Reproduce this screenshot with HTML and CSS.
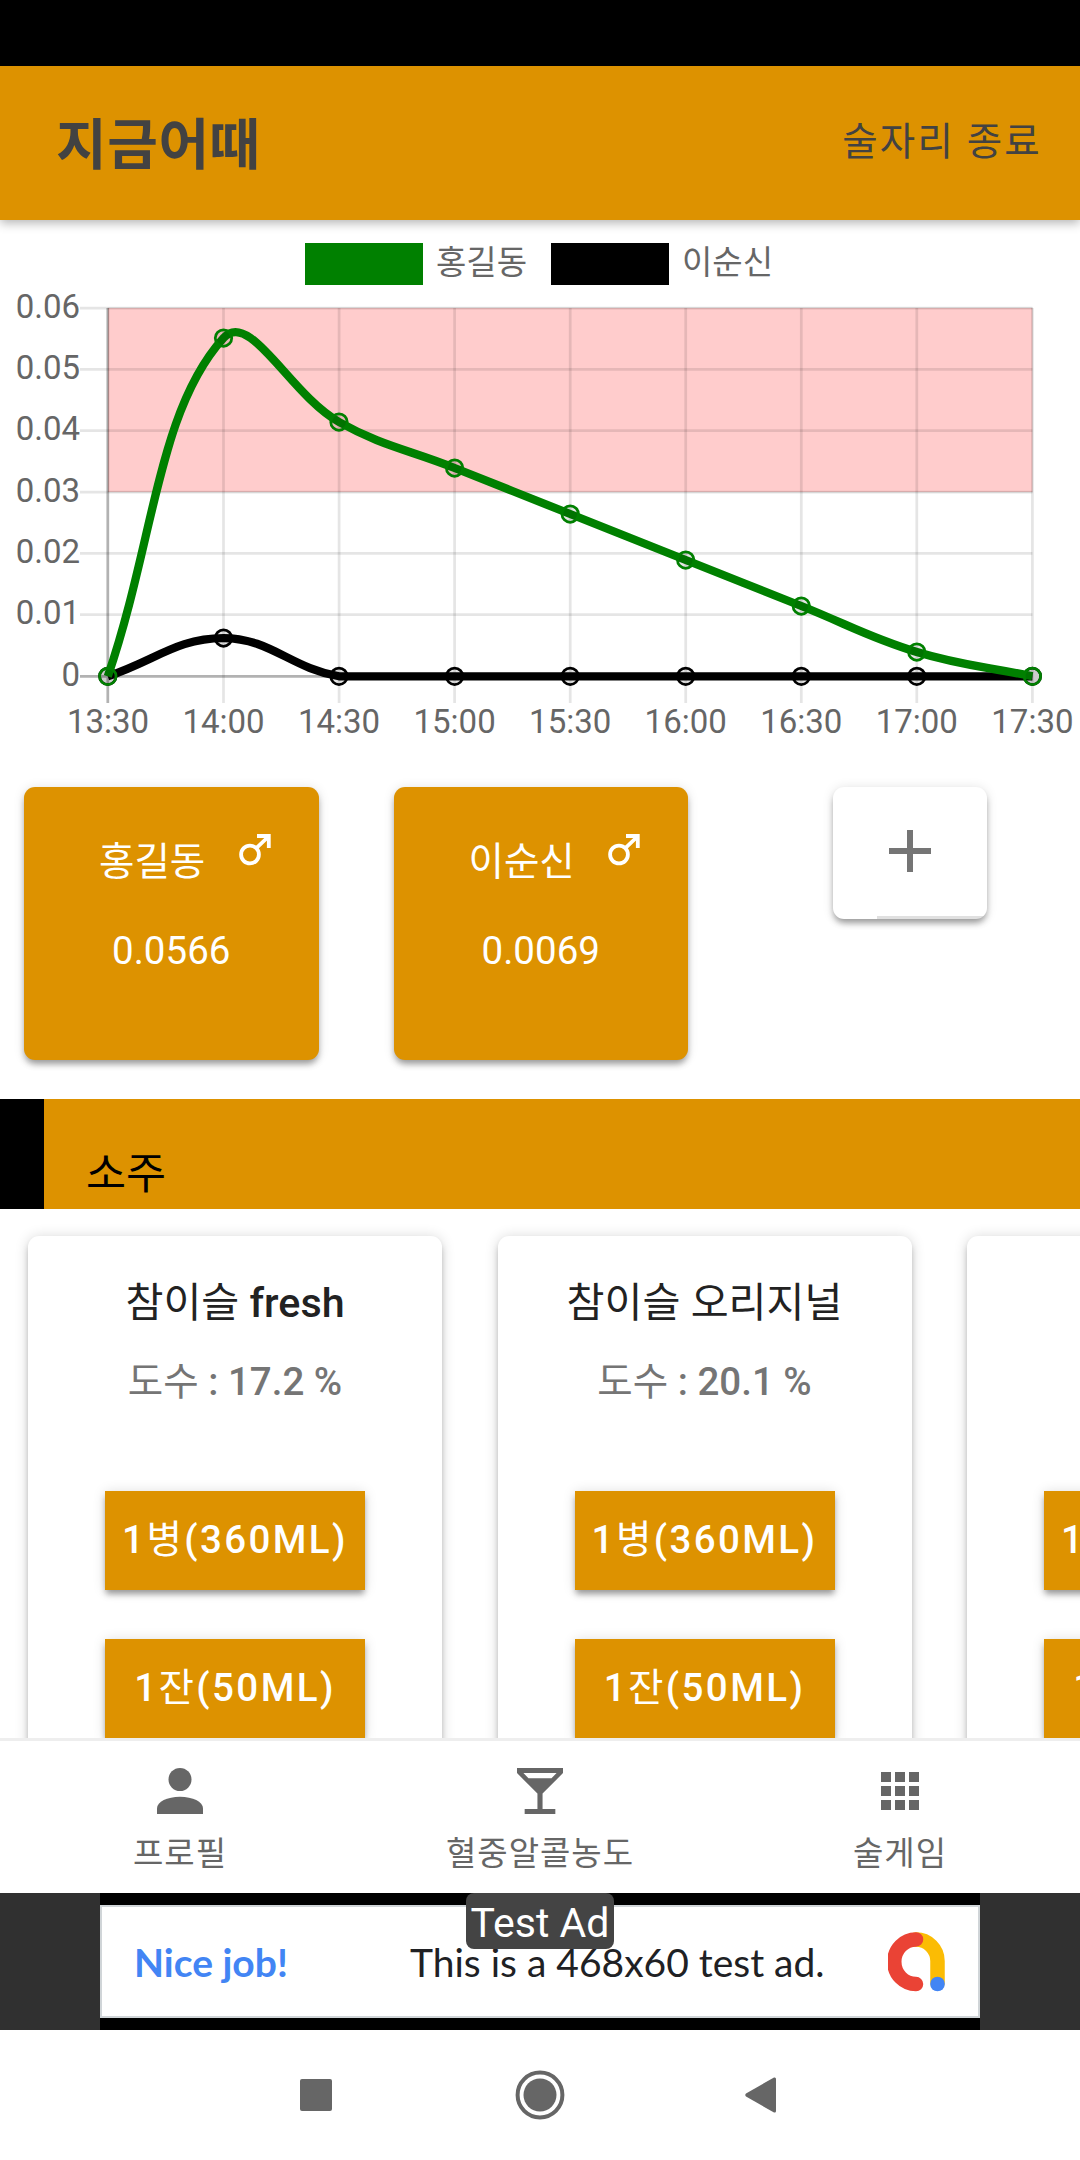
FILE: index.html
```html
<!DOCTYPE html>
<html lang="ko">
<head>
    <meta charset="UTF-8">
    <title>지금어때</title>
    <link rel="stylesheet" href="styles.css">
</head>
<body>
<div class="status-bar"></div>
<header class="toolbar">
    <h1>지금어때</h1>
    <button class="end-button">술자리 종료</button>
</header>
<main class="content">
    <div class="legend">
        <span class="legend-box green"></span><span class="legend-text">홍길동</span>
        <span class="legend-box black"></span><span class="legend-text">이순신</span>
    </div>
    <svg class="chart" width="1080" height="464" viewBox="0 286 1080 464">
        <!-- 위험 구간 -->
        <rect x="108" y="308" width="924.4" height="184" fill="#ff0000" fill-opacity="0.2" stroke="#000" stroke-opacity="0.12"/>
        <g class="grid">
            <path d="M80 308H1032.4M80 369.3H1032.4M80 430.6H1032.4M80 492H1032.4M80 553.3H1032.4M80 614.6H1032.4"/>
            <path d="M223.5 308V703M339.1 308V703M454.6 308V703M570.2 308V703M685.7 308V703M801.3 308V703M916.8 308V703M1032.4 308V703"/>
            <path class="zero" d="M80 676.3H1032.4M107.8 308V703"/>
        </g>
        <g class="y-labels">
            <text x="80" y="317.5">0.06</text>
            <text x="80" y="378.8">0.05</text>
            <text x="80" y="440">0.04</text>
            <text x="80" y="501.5">0.03</text>
            <text x="80" y="562.7">0.02</text>
            <text x="80" y="624">0.01</text>
            <text x="80" y="685.5">0</text>
        </g>
        <g class="x-labels">
            <text x="108" y="732.5">13:30</text>
            <text x="223.5" y="732.5">14:00</text>
            <text x="339" y="732.5">14:30</text>
            <text x="454.6" y="732.5">15:00</text>
            <text x="570.2" y="732.5">15:30</text>
            <text x="685.7" y="732.5">16:00</text>
            <text x="801.3" y="732.5">16:30</text>
            <text x="916.8" y="732.5">17:00</text>
            <text x="1032.4" y="732.5">17:30</text>
        </g>
        <g class="series black-series">
            <path d="M107.8 676.3C154.2 661 177.3 638 223.5 638S291.6 668.4 339 676.3H1032.4"/>
            <circle cx="107.8" cy="676.3" r="8.25"/>
            <circle cx="223.5" cy="638" r="8.25"/>
            <circle cx="339" cy="676.3" r="8.25"/>
            <circle cx="454.6" cy="676.3" r="8.25"/>
            <circle cx="570.2" cy="676.3" r="8.25"/>
            <circle cx="685.7" cy="676.3" r="8.25"/>
            <circle cx="801.3" cy="676.3" r="8.25"/>
            <circle cx="916.8" cy="676.3" r="8.25"/>
            <circle cx="1032.4" cy="676.3" r="8.25"/>
        </g>
        <g class="series green-series">
            <path d="M107.8 676.3C154.2 541 157.5 410.7 223.5 338C249.9 309 289.7 394.2 339 422C382 446.2 408.4 449.6 454.6 468C500.8 486.4 524 495.6 570.2 514C616.4 532.4 639.5 541.6 685.7 560C731.9 578.4 755.1 587.6 801.3 606C847.5 624.4 869.4 637.6 916.8 652C961.9 665.7 986.2 666.6 1032.4 676.3"/>
            <circle cx="107.8" cy="676.3" r="8.25"/>
            <circle cx="223.5" cy="338" r="8.25"/>
            <circle cx="339" cy="422" r="8.25"/>
            <circle cx="454.6" cy="468" r="8.25"/>
            <circle cx="570.2" cy="514" r="8.25"/>
            <circle cx="685.7" cy="560" r="8.25"/>
            <circle cx="801.3" cy="606" r="8.25"/>
            <circle cx="916.8" cy="652" r="8.25"/>
            <circle cx="1032.4" cy="676.3" r="8.25"/>
        </g>
    </svg>
    <div class="people">
        <div class="person-card">
            <div class="person-name">
                <span>홍길동</span>
                <svg class="male" width="32" height="32" viewBox="0 0 32 32"><circle cx="11" cy="20.5" r="8.9"/><path d="M17.3 14.2L29 3M18 2H29.8V14"/></svg>
            </div>
            <div class="person-value">0.0566</div>
        </div>
        <div class="person-card">
            <div class="person-name">
                <span>이순신</span>
                <svg class="male" width="32" height="32" viewBox="0 0 32 32"><circle cx="11" cy="20.5" r="8.9"/><path d="M17.3 14.2L29 3M18 2H29.8V14"/></svg>
            </div>
            <div class="person-value">0.0069</div>
        </div>
        <button class="add-card">
            <svg width="42" height="42" viewBox="0 0 42 42"><path d="M21 0V42M0 21H42" stroke="#757575" stroke-width="6"/></svg>
        </button>
    </div>
    <h2 class="section-title">소주</h2>
    <div class="drinks">
        <div class="drink-card">
            <div class="drink-name"><span class="ko">참이슬</span> fresh</div>
            <div class="drink-degree"><span class="ko">도수</span> : 17.2 %</div>
            <button class="drink-button">1<span class="ko">병</span>(360ML)</button>
            <button class="drink-button">1<span class="ko">잔</span>(50ML)</button>
        </div>
        <div class="drink-card">
            <div class="drink-name"><span class="ko">참이슬 오리지널</span></div>
            <div class="drink-degree"><span class="ko">도수</span> : 20.1 %</div>
            <button class="drink-button">1<span class="ko">병</span>(360ML)</button>
            <button class="drink-button">1<span class="ko">잔</span>(50ML)</button>
        </div>
        <div class="drink-card">
            <div class="drink-name"></div>
            <div class="drink-degree"></div>
            <button class="drink-button">1<span class="ko">병</span>(360ML)</button>
            <button class="drink-button">1<span class="ko">잔</span>(50ML)</button>
        </div>
    </div>
</main>
<nav class="tabs">
    <a class="tab">
        <svg width="46" height="46" viewBox="0 0 16 16"><circle cx="8" cy="4" r="4"/><path d="M8 10c4.42 0 8 1.79 8 4v2H0v-2c0-2.21 3.58-4 8-4z"/></svg>
        <span>프로필</span>
    </a>
    <a class="tab">
        <svg width="46" height="46" viewBox="3 3 18 18"><path fill-rule="evenodd" d="M21 5V3H3v2l8 8v6H6v2h12v-2h-5v-6l8-8zM7.5 7l-2-2h13l-2 2h-9z"/></svg>
        <span>혈중알콜농도</span>
    </a>
    <a class="tab">
        <svg width="38" height="46" viewBox="0 0 38 46"><path d="M0 4h10v10H0zM14 4h10v10H14zM28 4h10v10H28zM0 18h10v10H0zM14 18h10v10H14zM28 18h10v10H28zM0 32h10v10H0zM14 32h10v10H14zM28 32h10v10H28z"/></svg>
        <span>술게임</span>
    </a>
</nav>
<div class="ad">
    <div class="ad-frame">
        <div class="ad-banner">
            <span class="ad-title">Nice job!</span>
            <span class="ad-text">This is a 468x60 test ad.</span>
            <svg class="ad-logo" width="58" height="60" viewBox="0 0 58 60" fill="none" stroke-width="14.5" stroke-linecap="round">
                <path d="M28 7.5A21.5 21.5 0 0 1 49.5 29V51" stroke="#fbbc04"/>
                <path d="M28 7.5A21.5 22 0 0 0 28 52" stroke="#ea4335"/>
                <circle cx="49.5" cy="52" r="7.3" fill="#4285f4"/>
            </svg>
        </div>
        <div class="ad-badge">Test Ad</div>
    </div>
</div>
<div class="system-nav">
    <svg width="32" height="32"><rect width="32" height="32" rx="2"/></svg>
    <svg width="50" height="50"><circle cx="25" cy="25" r="22.4" fill="none" stroke="#666" stroke-width="4"/><circle cx="25" cy="25" r="16.5"/></svg>
    <svg width="31" height="36"><path d="M1 16.5L29 .5Q31 0 31 2V34Q31 36 29 35.5L1 19.5Q-.5 18 1 16.5z"/></svg>
</div>
</body>
</html>
```
FILE: styles.css
```css
* {
    box-sizing: border-box;
}
body {
    margin: 0;
    width: 1080px;
    height: 2160px;
    display: flex;
    flex-direction: column;
    overflow: hidden;
    background: #fff;
    font-family: Roboto, "Noto Sans CJK KR", sans-serif;
}
button {
    border: none;
    padding: 0;
    font-family: inherit;
}
h1, h2 {
    margin: 0;
}
.ko {
    font-weight: 400;
}
.status-bar {
    height: 66px;
    background: #000;
}
.toolbar {
    height: 154px;
    padding: 0 38px 0 56px;
    display: flex;
    justify-content: space-between;
    align-items: center;
    background: #dd9200;
    color: #424242;
    box-shadow: 0 3px 10px rgba(0, 0, 0, 0.3);
    position: relative;
}
.toolbar h1 {
    margin-bottom: 6px;
    font-size: 55px;
    font-weight: 700;
    letter-spacing: 0.6px;
}
.end-button {
    background: none;
    color: #424242;
    font-size: 38.5px;
    letter-spacing: 2.2px;
    margin-bottom: 10px;
}
.content {
    height: 1518px;
    overflow: hidden;
}
.legend {
    height: 66px;
    padding: 23px 0 0 305px;
    display: flex;
    color: #666;
    font-size: 33px;
    line-height: 40px;
}
.legend-box {
    width: 118px;
    height: 42px;
}
.legend-box.green {
    background: #008000;
}
.legend-box.black {
    background: #000;
}
.legend-text {
    width: 128px;
    padding-left: 13px;
}
.chart {
    display: block;
    font-size: 33px;
}
.grid path {
    stroke: rgba(0, 0, 0, 0.1);
    stroke-width: 2.75;
}
.grid .zero {
    stroke: rgba(0, 0, 0, 0.3);
}
.chart text {
    fill: #666;
}
.y-labels {
    text-anchor: end;
}
.x-labels {
    text-anchor: middle;
}
.series path {
    fill: none;
    stroke-width: 8.25;
}
.series circle {
    fill: rgba(0, 0, 0, 0.1);
    stroke-width: 2.75;
}
.black-series {
    stroke: #000;
}
.green-series {
    stroke: #008000;
}
.people {
    display: flex;
    align-items: flex-start;
    height: 349px;
    padding: 37px 0 0 24px;
}
.person-card {
    width: 294.5px;
    height: 273px;
    margin-right: 75px;
    padding-top: 42px;
    border-radius: 11px;
    background: #dd9200;
    color: #fff;
    font-size: 38.5px;
    text-align: center;
    box-shadow: 0 5px 6px -1px rgba(0, 0, 0, 0.35), 0 1px 12px rgba(0, 0, 0, 0.12);
}
.person-name {
    display: flex;
    height: 66px;
    padding-left: 75px;
    line-height: 66px;
}
.male {
    margin: 5px 0 0 33.5px;
    fill: none;
    stroke: #fff;
    stroke-width: 3.8;
}
.person-value {
    line-height: 112px;
}
.add-card {
    display: flex;
    justify-content: center;
    width: 154px;
    height: 132px;
    margin-left: 70px;
    padding-top: 43px;
    border-radius: 11px;
    background: linear-gradient(#e0e0e0, #e0e0e0) 44px 129px no-repeat #fff;
    box-shadow: 0 5px 6px -1px rgba(0, 0, 0, 0.35), 0 1px 12px rgba(0, 0, 0, 0.12);
}
.section-title {
    height: 110px;
    padding: 51px 0 0 42px;
    border-left: 44px solid #000;
    background: #dd9200;
    font-size: 43.5px;
    font-weight: 400;
    line-height: 50px;
}
.drinks {
    display: flex;
    gap: 55.5px;
    padding: 27px 0 0 28px;
}
.drink-card {
    flex: none;
    display: flex;
    flex-direction: column;
    align-items: center;
    width: 414px;
    height: 600px;
    border-radius: 11px;
    background: #fff;
    box-shadow: 0 5px 6px -1px rgba(0, 0, 0, 0.25), 0 1px 14px rgba(0, 0, 0, 0.16);
}
.drink-name {
    height: 108px;
    padding-top: 38px;
    color: #222;
    font-size: 41.25px;
    font-weight: 500;
    line-height: 58px;
}
.drink-degree {
    height: 147px;
    color: #757575;
    font-size: 38.5px;
    font-weight: 500;
    line-height: 76px;
}
.drink-button {
    flex: none;
    width: 260px;
    height: 99px;
    margin-bottom: 49px;
    padding-bottom: 9px;
    background: #dd9200;
    color: #fff;
    font-size: 38.5px;
    font-weight: 500;
    letter-spacing: 2.4px;
    box-shadow: 0 5px 6px -1px rgba(0, 0, 0, 0.35), 0 1px 12px rgba(0, 0, 0, 0.14);
}
.tabs {
    display: flex;
    height: 155px;
    padding-top: 27px;
    border-top: 3px solid #eee;
    background: #fff;
}
.tab {
    flex: 1;
    display: flex;
    flex-direction: column;
    align-items: center;
    color: #666;
    font-size: 33px;
    letter-spacing: 1px;
}
.tab svg {
    fill: #666;
}
.tab span {
    line-height: 40px;
    margin-top: 20px;
}
.ad {
    display: flex;
    justify-content: center;
    height: 137px;
    background: #303030;
}
.ad-frame {
    position: relative;
    width: 880px;
    padding: 12px 0;
    background: #000;
}
.ad-banner {
    display: flex;
    align-items: center;
    height: 113px;
    padding-left: 32px;
    border: 2px solid #d0d5d8;
    background: #fff;
    font-family: Lato, sans-serif;
    font-size: 39px;
    white-space: nowrap;
}
.ad-title {
    width: 276px;
    color: #4285f4;
    font-weight: 700;
}
.ad-text {
    width: 478px;
    color: #202124;
}
.ad-badge {
    position: absolute;
    top: 0;
    left: 366px;
    width: 148px;
    height: 56px;
    border-radius: 8px;
    background: #444;
    color: #fff;
    font-size: 41px;
    line-height: 61px;
    text-align: center;
}
.system-nav {
    flex: 1;
    display: flex;
    align-items: center;
    padding-left: 300px;
    fill: #666;
    gap: 183px;
}
.system-nav svg:last-child {
    margin-left: -3px;
}
```
